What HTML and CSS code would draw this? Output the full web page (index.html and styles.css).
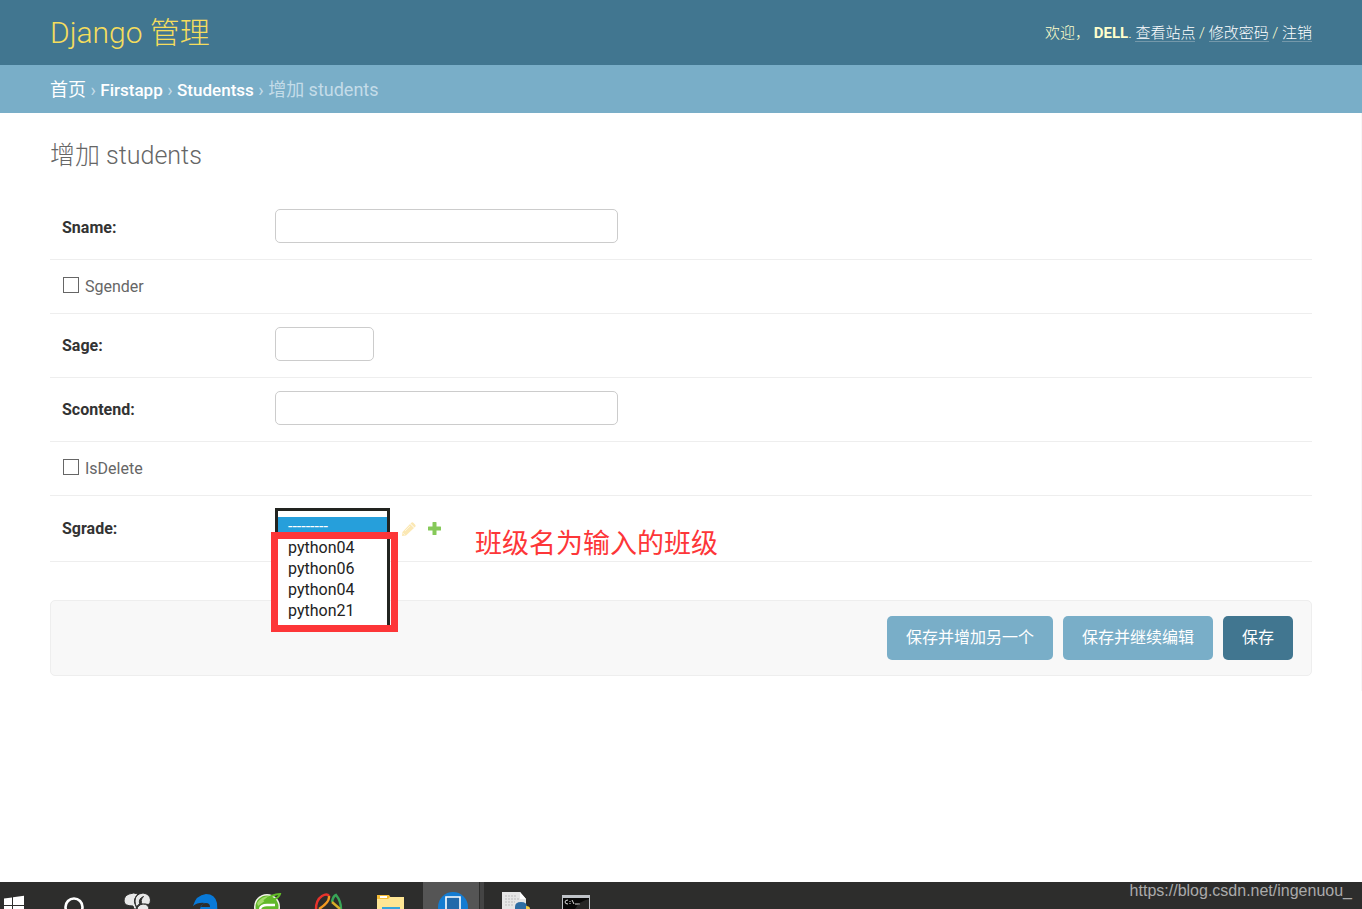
FILE: index.html
```html
<!DOCTYPE html>
<html lang="zh-CN">
<head>
<meta charset="utf-8">
<title>增加 students | Django 管理</title>
<link rel="stylesheet" href="styles.css">
</head>
<body>
<header class="header">
  <h1 class="brand">Django 管理</h1>
  <div class="user-tools">欢迎， <strong>DELL</strong>. <a href="#">查看站点</a> / <a href="#">修改密码</a> / <a href="#">注销</a></div>
</header>
<nav class="breadcrumbs"><a href="#">首页</a> › <a class="model" href="#">Firstapp</a> › <a class="model" href="#">Studentss</a> › 增加 students</nav>
<main class="content">
  <h2 class="title">增加 students</h2>
  <form>
    <div class="row"><label class="label" for="sname">Sname:</label><input class="text" id="sname" type="text"></div>
    <div class="row row-check"><input class="check" id="sgender" type="checkbox"><label for="sgender">Sgender</label></div>
    <div class="row"><label class="label" for="sage">Sage:</label><input class="text text-short" id="sage" type="text"></div>
    <div class="row"><label class="label" for="scontend">Scontend:</label><input class="text" id="scontend" type="text"></div>
    <div class="row row-check"><input class="check" id="isdelete" type="checkbox"><label for="isdelete">IsDelete</label></div>
    <div class="row row-grade">
      <label class="label" for="sgrade">Sgrade:</label>
      <div class="dropdown">
        <select class="options" id="sgrade" size="5">
          <option selected>---------</option>
          <option>python04</option>
          <option>python06</option>
          <option>python04</option>
          <option>python21</option>
        </select>
        <div class="marker"></div>
      </div>
      <div class="related">
        <svg width="14" height="14" viewBox="0 0 14 14"><path fill="#fbe8b4" d="M8 2l4 4-8 7.500-4 .5.500-4zM9 1q1.300-1.300 2.600 0l1.400 1.400q1.300 1.300 0 2.600l-.5.500-4-4z"/><path d="M3 9l5-5" stroke="#fff6dc"/><path d="M1.500 11.500l1 1" stroke="#fff"/></svg>
        <svg width="13" height="13" viewBox="0 0 13 13"><path fill="#86c959" d="M5 0h3q.5 0 .5.500v4h4q.5 0 .5.500v3q0 .5-.5.500h-4v4q0 .5-.5.500H5q-.5 0-.5-.5v-4h-4Q0 8.500 0 8V5q0-.5.500-.5h4v-4Q4.500 0 5 0z"/></svg>
      </div>
      <p class="note">班级名为输入的班级</p>
    </div>
    <div class="submit-row">
      <button type="button" class="button">保存并增加另一个</button>
      <button type="button" class="button">保存并继续编辑</button>
      <button type="submit" class="button button-main">保存</button>
    </div>
  </form>
</main>
<footer class="taskbar">
  <div class="apps">
    <svg class="app app-start" viewBox="0 0 44 27"><path fill="#fff" d="M4 16.500l8-1V23H4zM13 15.300l11-1.500V23H13zM4 24h8v3H4zM13 24h11v3H13z"/></svg>
    <svg class="app" viewBox="0 0 62 27"><circle cx="30" cy="25" r="8.500" fill="none" stroke="#fff" stroke-width="2.600"/></svg>
    <svg class="app app-wide" viewBox="0 0 68 27"><g fill="#e8e8e8" stroke="#2d2d2c" stroke-width="1"><path d="M18 19q0-5 5-7 5-2 9 0-5 5-3 10l2 5h-3l-1-3q-9 0-9-5z"/><path d="M29 19q0-7 8-8 7 1 7.500 7 0 3-2 4.500-4-1-6 0-3-4 1-8-5 2-4 7-1 2-3 3-1.500-2-1.500-5.500z"/><path d="M31 28q0-5 6-6 6 0 6 6z"/></g></svg>
    <svg class="app" viewBox="0 0 62 27"><path fill="#0879d8" d="M19 24q3-11 13-12 9 0 11 9l.3 6H26q1-5 5-6-7-1-12 3z"/><path fill="#2d2d2c" d="M27 25q1-4 5-4 4 0 4 4z"/></svg>
    <svg class="app" viewBox="0 0 62 27"><circle cx="31" cy="25" r="13" fill="#f4f4ec"/><circle cx="31" cy="25" r="11.500" fill="#63b82c"/><path fill="#a4dc6c" d="M21 21q5-8 15-7l-6 4-8 6z"/><path d="M24 27q1-4 7-4h8" fill="none" stroke="#fff" stroke-width="2.400"/><path d="M28 19q8-7 16-7-1 4-9 7" fill="none" stroke="#62bd28" stroke-width="2"/></svg>
    <svg class="app" viewBox="0 0 62 27" fill="none" stroke-width="2.400"><path stroke="#e8332c" d="M18 27q0-9 6-13 5-3 7 0"/><path stroke="#f39a21" d="M31 14q1 6-10 13"/><path stroke="#38a657" d="M34 20q1-6 4-7 5 6 5 14"/><path stroke="#d8ae28" d="M34 20l8 7"/></svg>
    <svg class="app" viewBox="0 0 62 27"><path fill="#f5bd37" d="M17 13h12l2 3h13v11H17z"/><path fill="#ffe694" d="M17 17h11l2-2h14v12H17z"/><path fill="#fff" d="M20 14h7v2h-7z"/><path fill="#38a5dc" d="M22 25h18v2H22z"/></svg>
    <svg class="app" viewBox="0 0 62 27"><path fill="#555" d="M1 0h56v27H1z"/><path fill="#444" d="M58 0h4v27h-4z"/><circle cx="31" cy="25" r="15" fill="#147cd2"/><path fill="#2269aa" stroke="#fff" stroke-width="1.600" d="M24 15h14v14H24z"/></svg>
    <svg class="app" viewBox="0 0 62 27"><path fill="#e6e6e6" d="M18 10h18l6 7v10H18z"/><path fill="#fff" d="M36 10v7h6z"/><path d="M21 14h12M21 17h14M21 20h10M21 23h9" stroke="#bbb" stroke-dasharray="2 1"/><path fill="#2e6da4" d="M31 25q0-5 6-5t6 5v2H31z"/><path fill="#f4cc43" d="M42 24q4 0 4 3h-4z"/></svg>
    <svg class="app" viewBox="0 0 62 27"><path fill="#bfc3c8" d="M16 13h28v14H16z"/><path fill="#080808" d="M17 16h26v11H17z"/><path d="M22 18q-3 0-3 2t3 2M24 19v1m0 1v1m2-4l2 4m1 0h5" stroke="#ddd" fill="none"/><path fill="#444" d="M43 17v10H29q4-8 14-10z" opacity=".5"/></svg>
  </div>
  <span class="watermark">https://blog.csdn.net/ingenuou_</span>
</footer>
</body>
</html>
```
FILE: styles.css
```css
* { box-sizing: border-box; }
body {
  margin: 0;
  min-height: 100vh;
  display: flex;
  flex-direction: column;
  background: #fff;
  color: #666;
  font: 16px/20px Roboto, "Noto Sans CJK SC", sans-serif;
}
.header {
  display: flex;
  align-items: center;
  justify-content: space-between;
  height: 65px;
  padding: 1px 50px 0;
  background: #417690;
  color: #ffc;
}
.brand {
  margin: 0;
  color: #f5dd5d;
  font-size: 30px;
  line-height: 40px;
  font-weight: 300;
}
.user-tools { font-size: 15px; font-weight: 300; }
.user-tools strong { font-weight: 700; }
.user-tools a {
  display: inline-block;
  line-height: 16px;
  color: #fff;
  text-decoration: none;
  border-bottom: 1px solid #7498aa;
}
.breadcrumbs {
  padding: 15px 50px 13px;
  background: #79aec8;
  color: #c4dce8;
  font-size: 18px;
}
.breadcrumbs a { color: #fff; text-decoration: none; }
.breadcrumbs .model { font-size: 17px; font-weight: 500; }
.content { padding: 28px 50px 15px; box-shadow: inset -1px 0 #f7f7f7; }
.title {
  margin: 0 0 25px;
  font-size: 25px;
  line-height: 30px;
  font-weight: 300;
}
.row {
  display: flex;
  align-items: center;
  height: 64px;
  padding: 0 12px;
  border-bottom: 1px solid #eee;
}
.row-check { height: 54px; gap: 6px; }
.row-grade { height: 66px; }
.label { width: 213px; padding-top: 1px; color: #333; font-weight: 700; }
.text {
  width: 343px;
  height: 34px;
  padding: 5px 6px;
  border: 1px solid #ccc;
  border-radius: 5px;
  background: #fff;
  font: inherit;
  margin: 0 0 4px;
}
.text-short { width: 99px; }
.check {
  appearance: none;
  width: 16px;
  height: 16px;
  margin: 0 0 3px 1px;
  border: 1px solid #666;
  background: #fff;
}
.dropdown { position: relative; align-self: stretch; width: 115px; }
.options {
  position: absolute;
  top: 12px;
  left: 0;
  width: 115px;
  height: 118px;
  padding: 6px 0 0;
  border: 3px solid #222420;
  border-bottom: 0;
  border-radius: 0;
  outline: 0;
  background: #fff;
  color: #222;
  font: 16px/21px Roboto, sans-serif;
  overflow: hidden;
}
.options option {
  height: 21px;
  min-height: 21px;
  padding: 0 10px;
  line-height: 21px;
}
.options option:checked {
  background: linear-gradient(#269fdb, #269fdb);
  color: #fff;
  -webkit-text-fill-color: #fff;
}
.marker {
  position: absolute;
  top: 36px;
  left: -4px;
  width: 127px;
  height: 100px;
  border: 7px solid #fd3638;
  pointer-events: none;
}
.related { display: flex; align-items: center; gap: 12px; padding-left: 12px; }
.note {
  margin: 26px 0 0 34px;
  color: #fd3638;
  font: 27px/40px "Noto Sans CJK SC", sans-serif;
}
.submit-row {
  display: flex;
  justify-content: flex-end;
  gap: 10px;
  margin-top: 38px;
  padding: 15px 18px;
  border: 1px solid #eee;
  border-radius: 5px;
  background: #f8f8f8;
}
.button {
  height: 44px;
  padding: 0 19px;
  border: 0;
  border-radius: 5px;
  background: #79aec8;
  color: #fff;
  font: 16px/20px Roboto, "Noto Sans CJK SC", sans-serif;
}
.button-main { background: #417690; }
.taskbar {
  display: flex;
  justify-content: space-between;
  height: 27px;
  margin-top: auto;
  background: #2d2d2c;
  overflow: hidden;
}
.apps { display: flex; }
.app { width: 62px; height: 27px; }
.app-start { width: 44px; }
.app-wide { width: 68px; }
.watermark {
  padding-right: 10px;
  color: #aaa;
  font: 16px/17px "Liberation Sans", sans-serif;
}
```
